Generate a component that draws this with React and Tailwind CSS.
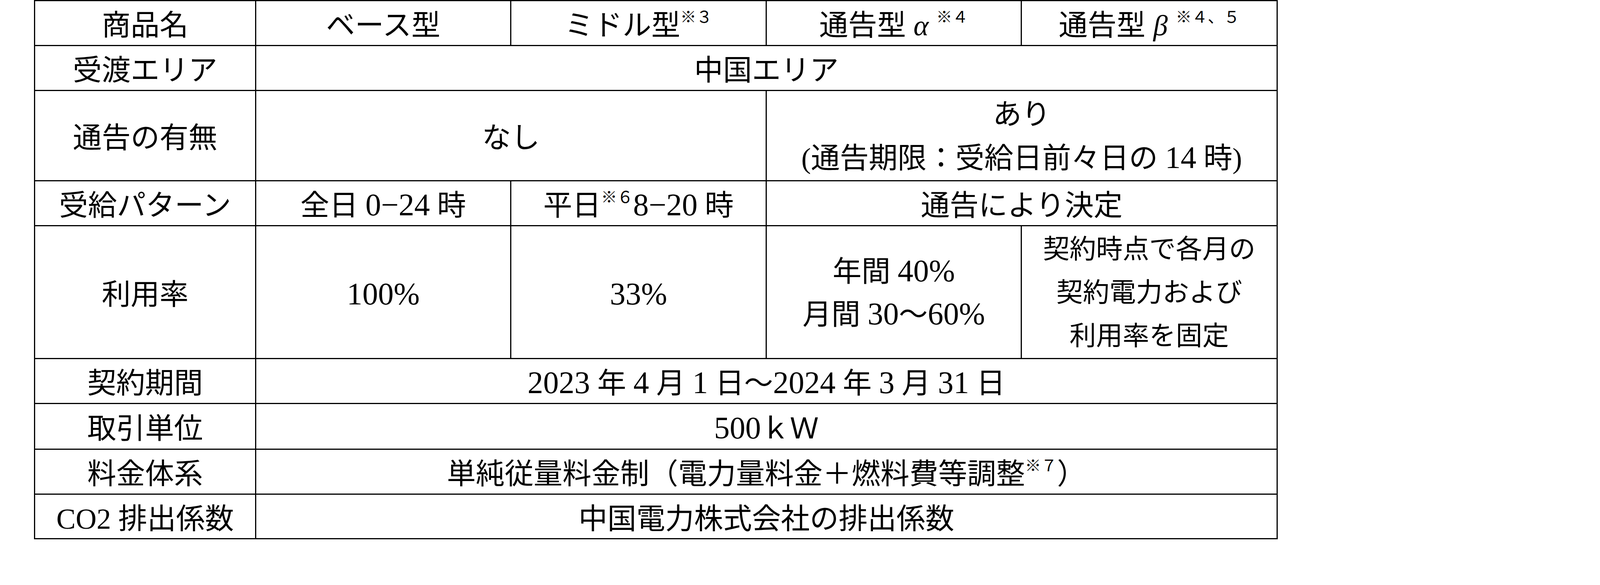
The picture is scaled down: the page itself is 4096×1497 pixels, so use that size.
import React from "react";

// superscript note mark, e.g. ※３
function Note({ children }) {
  return (
    <span className="text-[41px] align-[32px] leading-none">{children}</span>
  );
}

// latin digits run a little larger, like Century in the original
function N({ children }) {
  return <span className="text-[80px] leading-none">{children}</span>;
}

function Td({ children, multi = false, ...rest }) {
  return (
    <td
      className={
        "border-[3px] border-black p-0 text-center align-middle whitespace-nowrap " +
        (multi ? "pt-[4px]" : "pt-[12px] leading-[90px]")
      }
      {...rest}
    >
      {children}
    </td>
  );
}

function Greek({ children }) {
  return (
    <span className="inline-block w-[1.05em] text-center italic">{children}</span>
  );
}

export default function App() {
  return (
    <div className="min-h-screen w-full bg-white pl-[87px] font-['Liberation_Serif','Noto_Sans_CJK_JP',serif] text-[74px] text-black">
      <table className="table-fixed border-collapse border-[3px] border-black w-[3181px]">
        <colgroup>
          <col className="w-[566px]" />
          <col className="w-[653px]" />
          <col className="w-[654px]" />
          <col className="w-[653px]" />
          <col className="w-[655px]" />
        </colgroup>
        <tbody>
          {/* 商品名 */}
          <tr className="h-[115px]">
            <Td>商品名</Td>
            <Td>ベース型</Td>
            <Td>
              ミドル型<Note>※３</Note>
            </Td>
            <Td>
              通告型<Greek>α</Greek>
              <Note>※４</Note>
            </Td>
            <Td>
              通告型<Greek>β</Greek>
              <Note>※４、５</Note>
            </Td>
          </tr>

          {/* 受渡エリア */}
          <tr className="h-[115px]">
            <Td>受渡エリア</Td>
            <Td colSpan={4}>中国エリア</Td>
          </tr>

          {/* 通告の有無 */}
          <tr className="h-[228px]">
            <Td>通告の有無</Td>
            <Td colSpan={2}>なし</Td>
            <Td colSpan={2} multi>
              <div className="leading-[112px]">
                <div>あり</div>
                <div>
                  (通告期限：受給日前々日の <N>14</N> 時)
                </div>
              </div>
            </Td>
          </tr>

          {/* 受給パターン */}
          <tr className="h-[115px]">
            <Td>受給パターン</Td>
            <Td>
              全日 <N>0−24</N> 時
            </Td>
            <Td>
              平日<Note>※６</Note>
              <N>8−20</N> 時
            </Td>
            <Td colSpan={2}>通告により決定</Td>
          </tr>

          {/* 利用率 */}
          <tr className="h-[339px]">
            <Td>利用率</Td>
            <Td>
              <N>100%</N>
            </Td>
            <Td>
              <N>33%</N>
            </Td>
            <Td multi>
              <div className="leading-[110px]">
                <div>
                  年間 <N>40%</N>
                </div>
                <div>
                  月間 <N>30</N>～<N>60%</N>
                </div>
              </div>
            </Td>
            <Td multi>
              <div className="text-[68px] leading-[111px]">
                <div>契約時点で各月の</div>
                <div>契約電力および</div>
                <div>利用率を固定</div>
              </div>
            </Td>
          </tr>

          {/* 契約期間 */}
          <tr className="h-[115px]">
            <Td>契約期間</Td>
            <Td colSpan={4}>
              <N>2023</N> 年 <N>4</N> 月 <N>1</N> 日～<N>2024</N> 年 <N>3</N> 月{" "}
              <N>31</N> 日
            </Td>
          </tr>

          {/* 取引単位 */}
          <tr className="h-[117px]">
            <Td>取引単位</Td>
            <Td colSpan={4}>
              <N>500</N>ｋＷ
            </Td>
          </tr>

          {/* 料金体系 */}
          <tr className="h-[115px]">
            <Td>料金体系</Td>
            <Td colSpan={4}>
              単純従量料金制（電力量料金＋燃料費等調整<Note>※７</Note>）
            </Td>
          </tr>

          {/* CO2排出係数 */}
          <tr className="h-[114px]">
            <Td>CO2 排出係数</Td>
            <Td colSpan={4}>中国電力株式会社の排出係数</Td>
          </tr>
        </tbody>
      </table>
    </div>
  );
}
